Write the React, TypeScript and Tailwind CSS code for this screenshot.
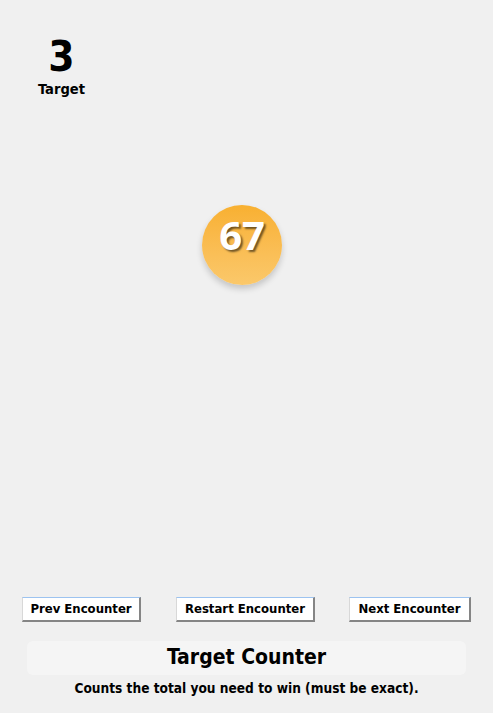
import React from 'react';

const font = { fontFamily: '"DejaVu Sans Condensed", "DejaVu Sans", Verdana, sans-serif' };

function EncounterButton({ label, className }: { label: string; className: string }) {
  return (
    <button
      className={`h-[25px] bg-white text-[13px] font-bold text-black leading-none border-t border-l border-t-[#9cc3f0] border-l-[#d8d8d8] border-r-2 border-b-2 border-r-[#858585] border-b-[#858585] ${className}`}
    >
      {label}
    </button>
  );
}

export default function App() {
  return (
    <div className="w-[493px] h-[713px] bg-[#f0f0f0] flex flex-col overflow-hidden" style={font}>
      <div className="pt-[36px] pl-[37px] w-[86px] flex flex-col items-center">
        <div className="text-[42px] font-bold leading-[42px] text-black">3</div>
        <div className="text-[14.6px] font-bold leading-[18px] mt-[2px] text-black">Target</div>
      </div>

      <div className="flex justify-center mt-[107px] pr-[9px]">
        <div className="w-[80px] h-[80px] rounded-full bg-gradient-to-b from-[#f8b030] to-[#fbc86a] shadow-[0_4px_6px_rgba(0,0,0,0.18)] flex items-center justify-center">
          <span
            className="text-[40px] font-bold text-white leading-none -mt-[20px] [text-shadow:2px_2px_2px_rgba(0,0,0,0.55)]"
            style={{ fontFamily: '"Open Sans", sans-serif' }}
          >
            67
          </span>
        </div>
      </div>

      <div className="flex-1" />

      <div className="flex justify-between pl-[22px] pr-[22px]">
        <EncounterButton label="Prev Encounter" className="w-[119px]" />
        <EncounterButton label="Restart Encounter" className="w-[139px] ml-[1px]" />
        <EncounterButton label="Next Encounter" className="w-[122px]" />
      </div>

      <div className="mx-[27px] mt-[19px] h-[34px] bg-[#f5f5f5] rounded-[6px] flex items-center justify-center">
        <span className="text-[21px] font-bold text-black">Target Counter</span>
      </div>
      <div className="text-center text-[13.6px] font-bold text-black mt-[3px] mb-[15px]">
        Counts the total you need to win (must be exact).
      </div>
    </div>
  );
}
